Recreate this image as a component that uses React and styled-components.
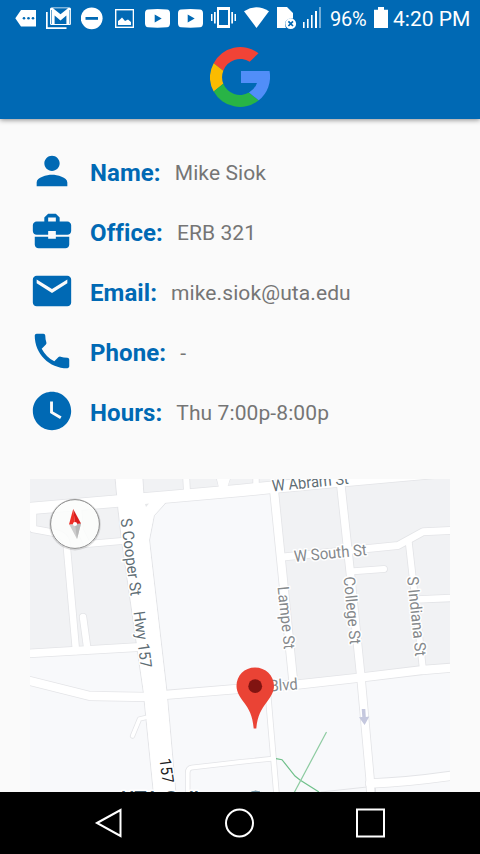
import React from "react";
import styled, { createGlobalStyle } from "styled-components";

const BLUE = "#0069b4";

const GlobalStyle = createGlobalStyle`
  html, body { margin: 0; padding: 0; background: #fafafa; }
  body { font-family: Roboto, "Liberation Sans", sans-serif; }
`;

const Screen = styled.div`
  width: 480px;
  height: 854px;
  display: flex;
  flex-direction: column;
  overflow: hidden;
  background: #fafafa;
`;

const Header = styled.header`
  flex: none;
  height: 119px;
  display: flex;
  flex-direction: column;
  align-items: center;
  background: ${BLUE};
  box-shadow: 0 1px 5px rgba(0, 0, 0, 0.45);
`;

const StatusBar = styled.div`
  align-self: stretch;
  height: 36px;
  display: flex;
  box-sizing: border-box;
  padding-left: 15px;
  color: #fff;
`;

const StatusIcon = styled.svg`
  flex: none;
  height: 36px;
  margin-left: ${(p) => p.$gap || 0}px;
  fill: #fff;
`;

const StatusText = styled.span`
  flex: none;
  margin-left: ${(p) => p.$gap}px;
  width: ${(p) => p.$width}px;
  font-size: ${(p) => p.$size}px;
  line-height: 38px;
  letter-spacing: ${(p) => p.$track || 0}px;
  white-space: nowrap;
`;

const Logo = styled.svg`
  width: 60px;
  height: 60px;
  margin-top: 11px;
`;

const Content = styled.main`
  flex: 1;
  min-height: 0;
  display: flex;
  flex-direction: column;
  padding: 23px 30px 0;
`;

const Details = styled.dl`
  margin: 0;
  display: flex;
  flex-direction: column;
`;

const DetailRow = styled.div`
  height: 60px;
  display: flex;
  align-items: center;
`;

const RowIcon = styled.svg`
  flex: none;
  width: 46px;
  height: 46px;
  margin: 0 15px 2px -1px;
  fill: ${BLUE};
`;

const Label = styled.dt`
  padding-top: 2px;
  font-size: 24px;
  line-height: 30px;
  font-weight: 700;
  font-variant-ligatures: none;
  letter-spacing: 0.08px;
  color: ${BLUE};
`;

const Value = styled.dd`
  margin: 0 0 0 14px;
  padding-top: 2px;
  font-size: 21px;
  line-height: 30px;
  letter-spacing: 0.1px;
  color: #757575;
`;

const MapView = styled.svg`
  display: block;
  flex: none;
  width: 420px;
  height: 313px;
  margin-top: 37px;
  font-family: Roboto, "Liberation Sans", sans-serif;
`;

const StreetName = styled.text`
  font-size: 16px;
  fill: ${(p) => p.$tone || "#85898c"};
  stroke: #fff;
  stroke-width: 3px;
  stroke-linejoin: round;
  paint-order: stroke;
`;

const NavBar = styled.nav`
  flex: none;
  height: 62px;
  display: flex;
  justify-content: space-between;
  align-items: center;
  box-sizing: border-box;
  padding: 0 93px 0 93px;
  background: #000;
`;

const NavIcon = styled.svg`
  width: 32px;
  height: 32px;
  fill: none;
  stroke: #fff;
  stroke-width: 2;
`;

const YoutubeIcon = ({ gap }) => (
  <StatusIcon $gap={gap} width="25" viewBox="0 0 25 36">
    <path fillRule="evenodd" d="M3 9.4Q12.5 8.4 22 9.4Q24.8 9.6 25 13V23.500Q24.800 27 22 27.300Q12.500 28 3 27.300Q.2 27 0 23.500V13Q.2 9.600 3 9.400ZM9.700 14.500V22.500L16.700 18.500Z" />
  </StatusIcon>
);

const StatusIcons = () => (
  <>
    <StatusIcon width="21" viewBox="15 0 21 36">
      <path d="M21 10H36V26.500H21L15.300 18.200Z" />
      <g fill={BLUE}>
        <circle cx="24" cy="18.300" r="1.300" />
        <circle cx="28.500" cy="18.300" r="1.300" />
        <circle cx="33" cy="18.300" r="1.300" />
      </g>
    </StatusIcon>
    <StatusIcon $gap={10} width="25" viewBox="46 0 25 36">
      <path d="M46 12H47.700V27.300H66.500V29H46Z" />
      <rect x="50" y="7.500" width="21" height="17.500" rx="1.500" />
      <path d="M53.300 11.200L60.500 17L67.700 11.200V24.200H66.500V14.800L60.500 19.800L54.500 14.800V24.200H53.300Z" fill="none" />
      <path d="M54.600 15.500L60.500 20.500L66.400 15.500V24H54.600Z" fill={BLUE} />
      <path d="M53 8.300H68L60.500 14.200Z" fill={BLUE} />
      <path d="M51.500 10V24M69.700 10V24" stroke={BLUE} strokeWidth=".6" />
    </StatusIcon>
    <StatusIcon $gap={10} width="22" viewBox="81 0 22 36">
      <circle cx="91.700" cy="18.300" r="10.900" />
      <rect x="85.500" y="17" width="12.500" height="2.800" fill={BLUE} />
    </StatusIcon>
    <StatusIcon $gap={12} width="19" viewBox="115 0 19 36">
      <rect x="115.700" y="9.700" width="17.700" height="17.600" fill="none" stroke="#fff" strokeWidth="1.400" />
      <path d="M118 25V21L120 19.500L122 17.500L125 21L128 19.500L131 22V25Z" />
    </StatusIcon>
    <YoutubeIcon gap={11} />
    <YoutubeIcon gap={8} />
    <StatusIcon $gap={8} width="25" viewBox="211 0 25 36">
      <path fillRule="evenodd" d="M217 7H230V28H217ZM219 10V25H228V10Z" />
      <path d="M211 14H212.500V21H211ZM214 12H215.700V23.500H214ZM231.300 12H233V23.500H231.300ZM234.500 14H236V21H234.500Z" />
    </StatusIcon>
    <StatusIcon $gap={8} width="25" viewBox="244 0 25 36">
      <path d="M244 11.300Q256.500 3.300 269 11.300L256.500 28Z" />
    </StatusIcon>
    <StatusIcon $gap={8} width="20" viewBox="277 0 20 36">
      <path d="M277 7H287L293 13V18.500Q285.500 18 285 24Q285 26 286 28H277Z" />
      <circle cx="290.700" cy="23.700" r="5.400" />
      <path d="M288.400 21.400L293 26M293 21.400L288.400 26" stroke={BLUE} strokeWidth="1.700" />
    </StatusIcon>
    <StatusIcon $gap={6} width="18" viewBox="303 0 18 36">
      <path d="M303 22H304.600V28H303ZM307 19H308.600V28H307ZM311 15H312.600V28H311ZM315 11H317V28H315Z" />
      <path d="M319 7H321V28H319Z" opacity=".45" />
    </StatusIcon>
  </>
);

const GoogleLogo = () => (
  <Logo viewBox="210 47 60 60">
    <path fill="#f14336" d="M213.700 63.200A30 30 0 0 1 258.500 53.300L249.700 61.700A18 18 0 0 0 223.300 70.700Z" />
    <path fill="#fbbb00" d="M213.700 63.200A30 30 0 0 0 213.700 91.500L223.300 83.700A18 18 0 0 1 223.300 70.700Z" />
    <path fill="#28b446" d="M213.700 91.500A30 30 0 0 0 258.700 100.300L249 92.600A18 18 0 0 1 223.300 83.700Z" />
    <path fill="#518ef8" d="M241 71H269.500A30 30 0 0 1 258.700 100.300L249 92.600A18 18 0 0 0 257 83H241Z" />
  </Logo>
);

const DETAILS = [
  {
    label: "Name:",
    value: "Mike Siok",
    icon: "M12 12c2.210 0 4-1.790 4-4s-1.790-4-4-4-4 1.790-4 4 1.790 4 4 4zm0 2c-2.670 0-8 1.340-8 4v2h16v-2c0-2.660-5.330-4-8-4z",
  },
  {
    label: "Office:",
    value: "ERB 321",
    icon: "M10 16v-1H3.010L3 19c0 1.110.89 2 2 2h14c1.110 0 2-.89 2-2v-4h-7v1h-4zm10-9h-4.010V5l-2-2h-4l-2 2v2H4c-1.100 0-2 .9-2 2v3c0 1.110.89 2 2 2h6v-2h4v2h6c1.100 0 2-.9 2-2V9c0-1.100-.9-2-2-2zm-6 0h-4V5h4v2z",
  },
  {
    label: "Email:",
    value: "mike.siok@uta.edu",
    icon: "M20 4H4c-1.100 0-1.990.9-1.990 2L2 18c0 1.100.9 2 2 2h16c1.100 0 2-.9 2-2V6c0-1.100-.9-2-2-2zm0 4l-8 5-8-5V6l8 5 8-5v2z",
  },
  {
    label: "Phone:",
    value: "-",
    icon: "M6.620 10.790c1.440 2.830 3.760 5.140 6.590 6.590l2.200-2.200c.27-.27.67-.36 1.020-.24 1.120.37 2.330.57 3.570.57.55 0 1 .45 1 1V20c0 .55-.45 1-1 1-9.390 0-17-7.610-17-17 0-.55.45-1 1-1h3.500c.55 0 1 .45 1 1 0 1.250.2 2.450.57 3.570.11.35.03.74-.25 1.020l-2.200 2.200z",
  },
  {
    label: "Hours:",
    value: "Thu 7:00p-8:00p",
    icon: "M12 2C6.500 2 2 6.500 2 12s4.500 10 10 10 10-4.500 10-10S17.500 2 12 2zm4.200 14.200L11 13V7h1.500v5.200l4.500 2.700-.8 1.300z",
  },
];

// Road centre lines with their widths, in map coordinates.
const ROADS = [
  ["M20 509.300L118 501L166 497L240 490.500L270 487.500L350 480L450 471", 11.500],
  ["M186 474L187 492", 6],
  ["M256 474V487", 5.500],
  ["M33 508L33 529L55 533Q65 535 66.500 543L76 651", 6.500],
  ["M122 541L87 544L80 530L78 505", 6],
  ["M83 617L87.500 650", 6.500],
  ["M20 654L140 647", 7.800],
  ["M20 678.500L90 696L148 697", 8.300],
  ["M160 695.300L237 689L298 684.500L360 677.700L423 670L460 667", 8.300],
  ["M148 717L139.500 719L132.500 736", 3.600],
  ["M187.700 800V773Q187.700 768 192 767.500L240 762L274 758.500", 3.800],
  ["M267.500 688L277 800", 4.800],
  ["M274 490L293.500 684", 8],
  ["M283 557L398 545.500L423 531.700L460 530", 7],
  ["M340.500 482L350 570L361 678L370 778L371 800", 7.600],
  ["M350 571.500L384 569", 6],
  ["M408.500 540L423 670", 6],
  ["M416 599.500L460 597.700", 6.500],
  ["M370 783.500Q410 782 460 774.500", 8.500],
];

const STREETS = [
  { name: "W Abram St", x: 272.500, y: 491.500, angle: -5.700, length: 77, tone: "#5f6e75" },
  { name: "W South St", x: 294.500, y: 562, angle: -5.400, length: 73 },
  { name: "S Cooper St", x: 120.500, y: 519, angle: 82.500, length: 78, tone: "#5f6e75" },
  { name: "Hwy 157", x: 133.500, y: 612, angle: 82.500, length: 57, tone: "#5f6e75" },
  { name: "157", x: 159.500, y: 759, angle: 82.500, length: 25, tone: "#202124" },
  { name: "Lampe St", x: 277.500, y: 587, angle: 84, length: 63 },
  { name: "College St", x: 343.500, y: 577, angle: 84.600, length: 68 },
  { name: "S Indiana St", x: 407, y: 577, angle: 84, length: 80 },
  { name: "Blvd", x: 270, y: 691.500, angle: -4, length: 28 },
];

const CampusMap = () => (
  <MapView viewBox="30 479 420 313">
    <rect x="30" y="479" width="420" height="313" fill="#f8f9fb" />
    <g fill="#f1f2f4">
      <path d="M30 479H118L140 645L30 653Z" />
      <path d="M142 479H450V472L144 497Z" />
      <path d="M144 479H425L360 483L145 496Z" />
      <path d="M274 489L360 479H450V668L293 686Z" />
    </g>
    <g fill="none" stroke="#e3e4e7" strokeLinecap="round" strokeLinejoin="round">
      {ROADS.map(([d, w]) => (
        <path key={d} d={d} strokeWidth={w + 1.600} />
      ))}
      <path d="M115 477L117.700 507L121.500 540L143.300 692L153.500 794M142.700 477L144.500 503L166.700 502L154.300 515.700L149.500 540L161 640L167 692L176 794" />
      <path d="M216 477L219 487H227L231 477M321 792L367 787M375.500 787V792" />
    </g>
    <path fill="#fff" d="M115.500 477L118.200 507L122 540L143.800 692L154 794H175.500L166.500 692L160.500 640L149 540L153.800 515.500L166 502L144 503L142.200 477ZM216.500 477L219.500 490H226.500L230.500 477Z" />
    <g fill="none" stroke="#fff" strokeLinecap="round" strokeLinejoin="round">
      {ROADS.map(([d, w]) => (
        <path key={d} d={d} strokeWidth={w} />
      ))}
    </g>
    <path d="M145 504L149 503.500L146 507Z" fill="#e6e7e9" />
    <g fill="none" stroke="#8ccba0" strokeWidth="1.200">
      <path d="M276 758.700L282 759.700L295 776L300 780L319 792" stroke="#6fc08a" />
      <path d="M326.500 732L294 793" />
    </g>
    <path fill="#c5c8de" d="M361.700 709H365.300L365.800 717L369.300 716.600L364.600 725L359 717.300L362.300 717Z" />
    {STREETS.map((s) => (
      <StreetName
        key={s.name}
        $tone={s.tone}
        transform={`translate(${s.x} ${s.y}) rotate(${s.angle})`}
        textLength={s.length}
        lengthAdjust="spacingAndGlyphs"
      >
        {s.name}
      </StreetName>
    ))}
    <StreetName $tone="#455b69" fontWeight="500" x="121" y="802.500" textLength="78" lengthAdjust="spacingAndGlyphs">
      UTA Coll
    </StreetName>
    <circle cx="255.700" cy="800" r="10" fill="#7898a8" stroke="#fff" />
    <path fill="#ea4335" d="M255 667.500C244.500 667.500 236.500 675.500 236.500 686C236.500 692 240 697 244 702.500C249 709.500 252.500 715 253.700 728.500H256.300C257.500 715 261.500 709.500 266.500 702.500C270.500 697 274 692 274 686C274 675.500 265.500 667.500 255 667.500Z" />
    <circle cx="255.200" cy="686.200" r="6.900" fill="#811411" />
    <circle cx="75" cy="524.600" r="25" fill="none" stroke="#000" strokeOpacity=".12" strokeWidth="1.600" />
    <circle cx="75" cy="524" r="24.400" fill="#fcfdfc" fillOpacity=".88" stroke="#8d8d8d" strokeWidth="1" />
    <path fill="#cccccc" d="M69.300 524.500L81 523.500L77 539Z" />
    <path fill="#b8b8b8" d="M75 524L81 523.500L77 539Z" />
    <path fill="#f03028" d="M73.200 509L69 524.600L75 524Z" />
    <path fill="#d91d1d" d="M73.200 509L81 523.500L75 524Z" />
    <circle cx="75" cy="524" r="2.100" fill="#fff" />
  </MapView>
);

export default function App() {
  return (
    <Screen>
      <GlobalStyle />
      <Header>
        <StatusBar>
          <StatusIcons />
          <StatusText $gap={9} $width={36} $size={20} $track={-0.2}>96%</StatusText>
          <StatusIcon $gap={8} width="14" viewBox="374 0 14 36">
            <path d="M378 7H384V9.700H388V28H374V9.700H378Z" />
          </StatusIcon>
          <StatusText $gap={5} $width={80} $size={21}>4:20 PM</StatusText>
        </StatusBar>
        <GoogleLogo />
      </Header>
      <Content>
        <Details>
          {DETAILS.map((d) => (
            <DetailRow key={d.label}>
              <RowIcon viewBox="0 0 24 24">
                <path d={d.icon} />
              </RowIcon>
              <Label>{d.label}</Label>
              <Value>{d.value}</Value>
            </DetailRow>
          ))}
        </Details>
        <CampusMap />
      </Content>
      <NavBar>
        <NavIcon viewBox="0 0 32 32">
          <path d="M4 16L27.500 3V29Z" />
        </NavIcon>
        <NavIcon viewBox="0 0 32 32">
          <circle cx="15.500" cy="16" r="13.500" />
        </NavIcon>
        <NavIcon viewBox="0 0 32 32">
          <rect x="2" y="2.500" width="27" height="27" />
        </NavIcon>
      </NavBar>
    </Screen>
  );
}
